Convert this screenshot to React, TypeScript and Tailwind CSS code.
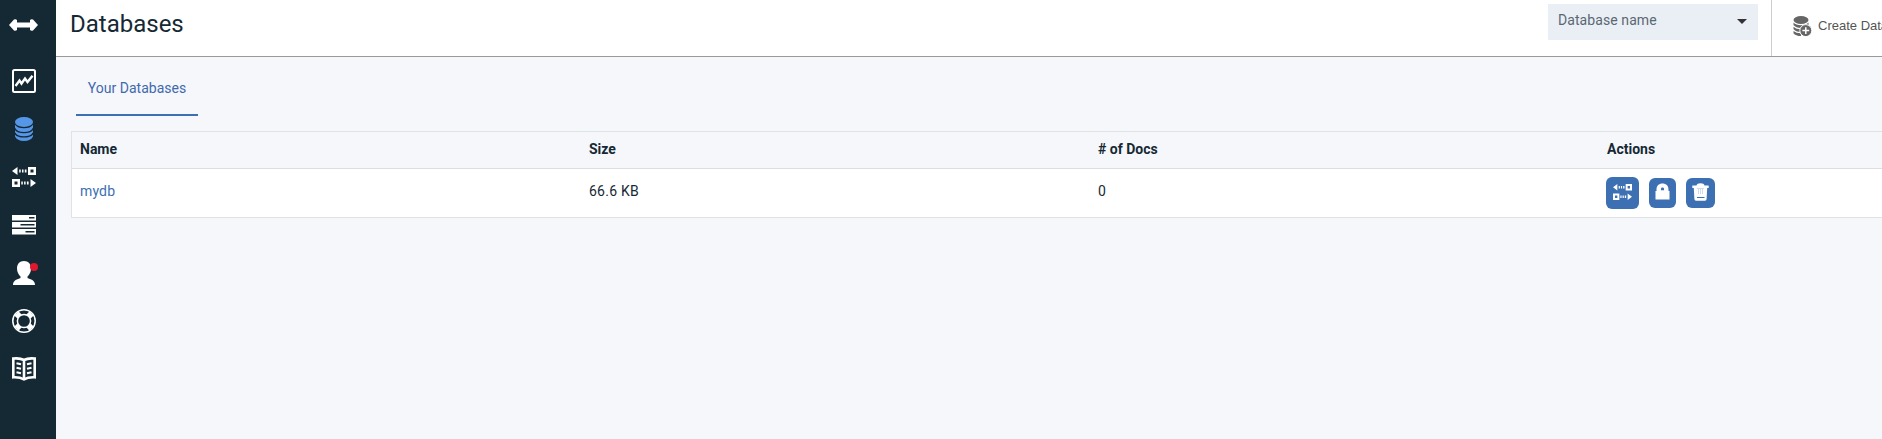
import React from "react";

type IconProps = { className?: string };

const BrandArrows = () => (
  <svg width="29" height="12" viewBox="0 0 29 12" fill="#fff">
    <path d="M0 6 L5 .6 Q6.5-.2 8 1 V3.4 H21 V1 Q22.500-.2 24 .6 L29 6 L24 11.400 Q22.500 12.200 21 11 V8.600 H8 V11 Q6.500 12.200 5 11.400Z" />
  </svg>
);

const ChartIcon = () => (
  <svg width="24" height="24" viewBox="0 0 24 24" fill="none" stroke="#fff">
    <rect x="1" y="1" width="22" height="22" rx="1.500" strokeWidth="2" />
    <path d="M3.500 17 L7.500 11.500 L9.500 14.500 L13 9.500 L15.500 13 L20.500 6.800" strokeWidth="2.400" />
  </svg>
);

const DatabaseIcon = () => (
  <svg width="24" height="24" viewBox="0 0 24 24" fill="#5596e6">
    <ellipse cx="12" cy="5" rx="9" ry="5" />
    <path d="M3 7.800 Q5.500 11.300 12 11.300 T21 7.800 V10.500 Q19 15 12 15 T3 10.500Z" />
    <path d="M3 13.200 Q5.500 16.200 12 16.200 T21 13.200 V15 Q19 19.300 12 19.300 T3 15Z" />
    <path d="M3 17.700 Q5.500 20.500 12 20.500 T21 17.700 V19.600 Q19 24 12 24 T3 19.600Z" />
  </svg>
);

const ReplicationIcon = ({ className }: IconProps) => (
  <svg className={className} viewBox="0 0 24 20" fill="#fff">
    <path d="M0 4 L5.500 0 V8Z M7.200 2.500h1.500v3h-1.500z M10 2.500h1.500v3H10z M12.800 2.500h1.700v3h-1.700z" />
    <path fillRule="evenodd" d="M16 0h8v8h-8z M18.500 2.500v3h3v-3z M0 12h8v8H0z M2.500 14.500v3h3v-3z" />
    <path d="M24 16 L18.500 12 V20Z M9.300 14.500h1.500v3H9.300z M12.100 14.500h1.500v3h-1.500z M14.900 14.500h1.700v3h-1.700z" />
  </svg>
);

const ServersIcon = () => (
  <svg width="24" height="24" viewBox="0 0 24 24" fill="#fff">
    <path fillRule="evenodd" d="M0 2h24v5.400H0z M17 4v1.500h5.500V4z M0 9h24v5.500H0z M8.500 11v1.500h14V11z M0 16h24v5.400H0z M13.500 18v1.500h9V18z" />
  </svg>
);

const UserIcon = () => (
  <svg width="24" height="24" viewBox="0 0 24 24" className="overflow-visible">
    <path fill="#fff" d="M12 0 C16.500 0 19 3 19 7.500 C19 11 17.500 13.500 15.500 15.500 V17 C18.500 18.500 23 18.800 23 24 H1 C1 18.800 5.500 18.500 8.500 17 V15.500 C6.500 13.500 5 11 5 7.500 C5 3 7.500 0 12 0Z" />
    <circle cx="22" cy="6" r="4" fill="#e0182d" />
  </svg>
);

const SupportIcon = () => (
  <svg width="24" height="24" viewBox="0 0 24 24" fill="none" stroke="#fff">
    <circle cx="12" cy="12" r="11.200" strokeWidth="1.500" />
    <circle cx="12" cy="12" r="6.600" strokeWidth="1.500" />
    <path d="M4.500 4.500 L7.500 7.500 M16.500 16.500 L19.500 19.500 M4.500 19.500 L7.500 16.500 M16.500 7.500 L19.500 4.500" strokeWidth="6" />
  </svg>
);

const DocsIcon = () => (
  <svg width="24" height="24" viewBox="0 0 24 24" fill="none" stroke="#fff" strokeWidth="2.200">
    <path d="M1.300 1.500 Q8 .8 12 3 Q16 .8 22.700 1.500 V20.300 Q16 20 12 22.300 Q8 20 1.300 20.300Z M12 3V22.300" strokeWidth="2.600" />
    <path d="M4.500 6.200 L9 7.200 M4.500 10.700 L9 11.700 M4.500 15.200 L9 16.200 M15 7.200 L19.500 6.200 M15 11.700 L19.500 10.700 M15 16.200 L19.500 15.200" />
  </svg>
);

const CreateIcon = () => (
  <svg width="19" height="21" viewBox="0 0 19 21" fill="#666">
    <ellipse cx="8" cy="4" rx="7.500" ry="4" />
    <path d="M.5 6.500 Q3 9.200 8 9.200 T15.500 6.500 V9 Q13 12 8 12 T.5 9Z" />
    <path d="M.5 10.800 Q3 13.300 8 13.300 V16 Q2.500 16 .5 13Z M.5 14.900 Q3 17.300 8 17.300 V20 Q2.500 20 .5 17.200Z" />
    <circle cx="12.800" cy="14.600" r="6" stroke="#fff" strokeWidth="1" />
    <path d="M12.800 11.200v6.800M9.400 14.600h6.800" stroke="#fff" strokeWidth="1.500" />
  </svg>
);

const LockIcon = () => (
  <svg width="15" height="17" viewBox="0 0 15 17" fill="#fff">
    <path fillRule="evenodd" d="M.5 16.500 V8 H1.500 V6.500 C1.500 2.500 3.800 .4 7.500 .4 S13.500 2.500 13.500 6.500 V8 H14.500 V16.500Z M6 7.200 H9 V6 C9 5 8.500 4.500 7.500 4.500 S6 5 6 6Z" />
  </svg>
);

const TrashIcon = () => (
  <svg width="17" height="18" viewBox="0 0 17 18" fill="#fff">
    <path d="M.3 2.500 H4.500 Q5 .3 8.500 .3 T12.500 2.500 H16.700 V5 H15.200 L14.600 16 Q14.500 17.800 13 17.800 H4 Q2.500 17.800 2.400 16 L1.800 5 H.3Z" />
    <path d="M5 14.500H12.500" stroke="#3d70b2" strokeWidth="1" />
    <path d="M5 5.500H12M6.500 6V11M8.500 6V11M10.500 6V11" stroke="#b0c4e0" strokeWidth=".6" />
  </svg>
);

const navigation = [
  { label: "Monitoring", icon: <ChartIcon /> },
  { label: "Databases", icon: <DatabaseIcon /> },
  { label: "Replication", icon: <ReplicationIcon className="h-5 w-6" /> },
  { label: "Active Tasks", icon: <ServersIcon /> },
  { label: "Account", icon: <UserIcon /> },
  { label: "Support", icon: <SupportIcon /> },
  { label: "Documentation", icon: <DocsIcon /> },
];

function Sidebar() {
  return (
    <nav className="w-14 shrink-0 bg-[#152935]">
      <div className="flex h-[57px] items-start pt-[19px] pl-[9px]">
        <BrandArrows />
      </div>
      {navigation.map(({ label, icon }) => (
        <a key={label} aria-label={label} className="flex h-12 items-center pl-3">
          {icon}
        </a>
      ))}
    </nav>
  );
}

function Header() {
  return (
    <header className="flex h-[57px] border-b border-[#999] bg-white">
      <h1 className="grow pt-[8px] pl-[14px] text-[24px] leading-8">Databases</h1>
      <div className="mt-1 mr-[13px] flex h-9 w-[210px] shrink-0 justify-between bg-[#eaeff6] pr-[11px] pl-[10px] text-[14px] leading-8 tracking-[0.08px] text-[#5a6872]">
        <span>Database name</span>
        <svg width="10" height="5" viewBox="0 0 10 5" className="mt-[15px]">
          <path d="M0 0H10L5 5Z" fill="#333" />
        </svg>
      </div>
      <button className="flex w-[111px] shrink-0 items-start gap-[6px] overflow-hidden border-l border-[#ccc] pl-[21px] font-['Liberation_Sans',sans-serif] text-[13px] text-[#555]">
        <span className="mt-4 shrink-0"><CreateIcon /></span>
        <span className="mt-4 leading-[19px] whitespace-nowrap">Create Database</span>
      </button>
    </header>
  );
}

function DatabaseTable() {
  return (
    <div className="mt-[15px] ml-[15px] w-[2038px] border border-[#dfe3e6] text-[14px]">
      <div className="grid h-[37px] grid-cols-4 border-b border-[#dcdfe2] pb-px font-bold">
        {["Name", "Size", "# of Docs", "Actions"].map((heading) => (
          <div key={heading} className="pl-2 leading-[35px]">{heading}</div>
        ))}
      </div>
      <div className="grid h-12 grid-cols-4 bg-white leading-[45px]">
        <a className="pl-2 tracking-[0.15px] text-[#3d70b2]">mydb</a>
        <div className="pl-2 tracking-[0.25px]">66.6 KB</div>
        <div className="pl-2">0</div>
        <div className="flex items-start pt-2 pl-[7px]">
          <button aria-label="Replicate" className="flex h-8 w-[33px] items-start justify-center rounded-md bg-[#3d70b2] pt-[7px]">
            <ReplicationIcon className="h-4 w-[19px]" />
          </button>
          <button aria-label="Permissions" className="mt-px ml-[10px] flex h-[30px] w-[27px] justify-center rounded-md bg-[#3d70b2] pt-[5px]">
            <LockIcon />
          </button>
          <button aria-label="Delete" className="mt-px ml-[10px] flex h-[30px] w-[29px] justify-center rounded-md bg-[#3d70b2] pt-[5px]">
            <TrashIcon />
          </button>
        </div>
      </div>
    </div>
  );
}

export default function App() {
  return (
    <div className="flex h-[439px] w-full overflow-hidden bg-[#f5f7fb] font-[Roboto,sans-serif] text-[#152935]">
      <Sidebar />
      <main className="min-w-0 grow overflow-hidden">
        <Header />
        <div className="ml-5 flex h-[59px] w-[122px] justify-center border-b-2 border-[#3d70b2] pt-[21px] text-[14px] leading-5 tracking-[0.03px] whitespace-nowrap text-[#4169ad]">
          Your Databases
        </div>
        <DatabaseTable />
      </main>
    </div>
  );
}
